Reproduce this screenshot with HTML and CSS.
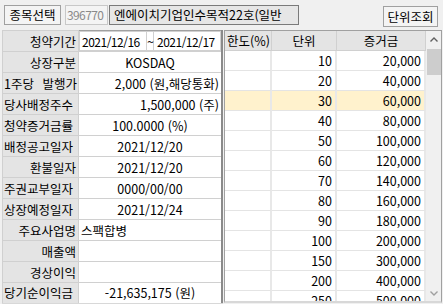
FILE: index.html
```html
<!DOCTYPE html>
<html lang="ko">
<head>
<meta charset="utf-8">
<link rel="stylesheet" href="styles.css">
</head>
<body>
<div class="top">
  <button class="btn sel">종목선택</button>
  <div class="code">396770</div>
  <div class="name">엔에이치기업인수목적22호(일반</div>
  <button class="btn unit">단위조회</button>
</div>
<div class="main">
  <table class="info">
    <tr><th>청약기간</th><td class="period"><span class="d">2021/12/16</span><span class="t">~</span><span class="d">2021/12/17</span></td></tr>
    <tr><th>상장구분</th><td class="c">KOSDAQ</td></tr>
    <tr><th class="j">1주당 발행가</th><td class="r">2,000 (원,해당통화)</td></tr>
    <tr><th class="j">당사배정주수</th><td class="r">1,500,000 (주)</td></tr>
    <tr><th class="j">청약증거금률</th><td class="c">100.0000 (%)</td></tr>
    <tr><th class="j">배정공고일자</th><td class="c">2021/12/20</td></tr>
    <tr><th>환불일자</th><td class="c">2021/12/20</td></tr>
    <tr><th class="j">주권교부일자</th><td class="c">0000/00/00</td></tr>
    <tr><th class="j">상장예정일자</th><td class="c">2021/12/24</td></tr>
    <tr><th>주요사업명</th><td class="l">스팩합병</td></tr>
    <tr><th>매출액</th><td></td></tr>
    <tr><th>경상이익</th><td></td></tr>
    <tr><th class="j">당기순이익금</th><td class="c">-21,635,175 (원)</td></tr>
  </table>
  <div class="grid">
    <div class="gtable">
      <div class="ghead"><span>한도(%)</span><span>단위</span><span>증거금</span></div>
      <div class="grow"><span></span><span>10</span><span>20,000</span></div>
      <div class="grow"><span></span><span>20</span><span>40,000</span></div>
      <div class="grow hl"><span></span><span>30</span><span>60,000</span></div>
      <div class="grow"><span></span><span>40</span><span>80,000</span></div>
      <div class="grow"><span></span><span>50</span><span>100,000</span></div>
      <div class="grow"><span></span><span>60</span><span>120,000</span></div>
      <div class="grow"><span></span><span>70</span><span>140,000</span></div>
      <div class="grow"><span></span><span>80</span><span>160,000</span></div>
      <div class="grow"><span></span><span>90</span><span>180,000</span></div>
      <div class="grow"><span></span><span>100</span><span>200,000</span></div>
      <div class="grow"><span></span><span>150</span><span>300,000</span></div>
      <div class="grow"><span></span><span>200</span><span>400,000</span></div>
      <div class="grow"><span></span><span>250</span><span>500,000</span></div>
    </div>
    <div class="scroll">
      <svg class="arr" width="16" height="16" viewBox="0 0 16 16"><path d="M4.5 9.5 L8 6 L11.5 9.5" fill="none" stroke="#606060" stroke-width="1.4"/></svg>
      <div class="thumb"></div>
      <div class="track"></div>
      <svg class="arr" width="16" height="16" viewBox="0 0 16 16"><path d="M4.5 6.5 L8 10 L11.5 6.5" fill="none" stroke="#a0a0a0" stroke-width="1.4"/></svg>
    </div>
  </div>
</div>
</body>
</html>
```
FILE: styles.css
```css
* { box-sizing: border-box; }
html, body { margin: 0; padding: 0; }
body {
  width: 443px;
  height: 304px;
  overflow: hidden;
  background: #f0f0f0;
  font-family: "Noto Sans CJK KR", "Noto Sans", sans-serif;
  font-size: 12px;
  color: #000;
}
.top {
  display: flex;
  align-items: center;
  height: 30px;
  padding: 0 4px 0 4px;
}
.btn {
  font: inherit;
  font-size: 12.5px;
  height: 20px;
  padding: 0 3px;
  background: #f4f4f4;
  border: 1px solid #a0a0a0;
  color: #000;
  line-height: 17px;
}
.sel { width: 57px; margin-top: -1px; }
.code {
  width: 43px;
  height: 20px;
  margin-left: 4px;
  border: 1px solid #c8c8c8;
  background: #f4f4f4;
  color: #8a8a8a;
  line-height: 18px;
  padding-left: 1px;
  font-size: 12px;
  letter-spacing: -0.6px;
  margin-top: -1px;
  white-space: nowrap;
  overflow: hidden;
}
.name {
  width: 190px;
  height: 20px;
  margin-left: 1px;
  border: 1px solid #7a7a7a;
  background: #e6e6e6;
  line-height: 18px;
  padding-left: 4px;
  white-space: nowrap;
  overflow: hidden;
  font-size: 12.5px;
  margin-top: -1px;
}
.unit { margin-left: auto; width: 55px; height: 21px; margin-top: 3px; margin-right: 1px; }
.main {
  display: flex;
  padding-left: 2px;
}
.info {
  border-collapse: collapse;
  width: 221px;
  border: 1px solid #a0a0a0;
  border-right: 2px solid #8a8a8a;
  border-bottom: 2px solid #d8d8d8;
}
.info tr { height: 21px; }
.info th, .info td {
  border: 1px solid #d0d0d0;
  padding: 0 2px;
  height: 20px;
  line-height: 19px;
  white-space: nowrap;
  font-weight: normal;
  font-size: 12.5px;
}
.info th {
  width: 78px;
  background: #e4e4e4;
  text-align: right;
  padding-right: 2px;
}
.info th.j { text-align: justify; text-align-last: justify; padding-left: 1px; padding-right: 1px; }
.info td { background: #fff; }
.info td.c { text-align: center; }
.info td.r { text-align: right; }
.info td.l { text-align: left; }
.info td.period { padding: 0; }
.period { display: flex; }
.period .d {
  display: inline-block;
  width: 66px;
  padding-left: 2px;
  font-size: 12px;
  letter-spacing: -0.5px;
  overflow: hidden;
}
.period .t {
  display: inline-block;
  width: 8px;
  text-align: center;
  border-left: 1px solid #d0d0d0;
  border-right: 1px solid #d0d0d0;
  background: #fff;
}
.period .d:last-child { padding-left: 3px; }
.grid {
  display: flex;
  margin-left: 1px;
  width: 218px;
  height: 273px;
  border: 1px solid #a0a0a0;
  border-bottom: 2px solid #d8d8d8;
  background: #fff;
  overflow: hidden;
}
.gtable { width: 201px; }
.ghead, .grow {
  display: grid;
  grid-template-columns: 47px 65px 89px;
  height: 20px;
}
.ghead span {
  background: #e4e4e4;
  border-right: 1px solid #d0d0d0;
  border-bottom: 1px solid #d0d0d0;
  text-align: center;
  line-height: 19px;
  font-size: 12.5px;
}
.ghead span:first-child { text-align: left; padding-left: 2px; }
.grow span {
  border-right: 2px solid #e8e8e8;
  border-bottom: 1px solid #e4e4e4;
  text-align: right;
  padding-right: 3px;
  line-height: 19px;
  font-size: 12.5px;
}
.grow.hl span { background: #fff2cd; }
.scroll {
  width: 17px;
  background: #f0f0f0;
  display: flex;
  flex-direction: column;
  align-items: center;
}
.arr { flex: none; margin-top: 1px; }
.thumb { width: 15px; height: 26px; background: #cdcdcd; margin-top: 1px; }
.track { flex: 1; }
```
